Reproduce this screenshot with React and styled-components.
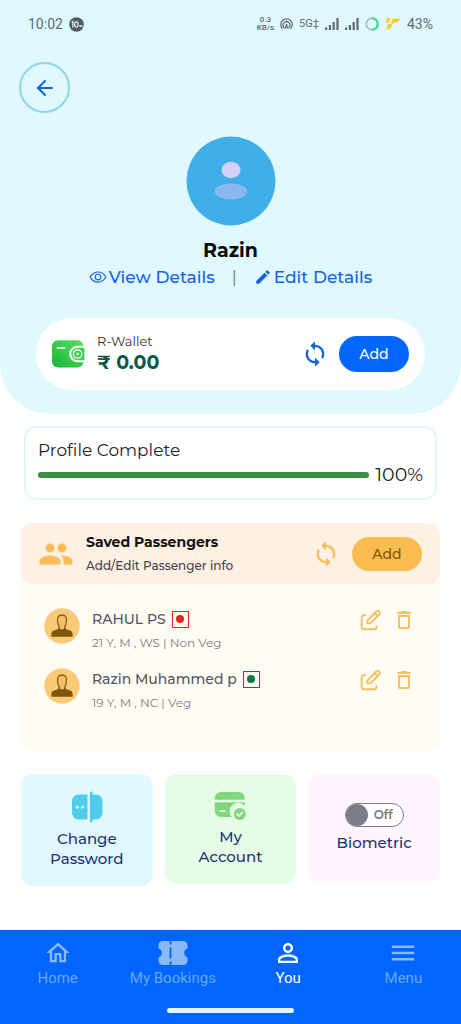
import React from "react";
import styled, { createGlobalStyle } from "styled-components";
import { ArrowLeft } from "lucide-react";
import { IoEyeOutline } from "react-icons/io5";
import {
  MdDeleteOutline,
  MdEdit,
  MdMenu,
  MdOutlineHome,
  MdPeople,
  MdPersonOutline,
  MdSync,
} from "react-icons/md";

const GlobalStyle = createGlobalStyle`
  *, *::before, *::after { box-sizing: border-box; }
  body {
    margin: 0;
    background: #fff;
    font-family: "Montserrat", Inter, "Noto Sans", sans-serif;
    color: #222;
  }
  h1, h2, p, ul { margin: 0; padding: 0; }
  ul { list-style: none; }
  svg { display: block; flex: none; }
  button { font: inherit; border: 0; padding: 0; cursor: pointer; background: none; }
  a { text-decoration: none; }
`;

const Page = styled.div`
  min-height: 100vh;
  display: flex;
  flex-direction: column;
`;

const Header = styled.header`
  background: #e0f8ff;
  border-radius: 0 0 50px 50px;
  padding-bottom: 24px;
`;

const StatusBar = styled.div`
  height: 48px;
  padding: 0 28px;
  display: flex;
  align-items: center;
  justify-content: space-between;
  font: 14px/16px Roboto, sans-serif;
  color: #5c6b70;
`;

const StatusGroup = styled.div`
  display: flex;
  align-items: center;
  gap: 6px;
`;

const NetSpeed = styled.span`
  font-size: 8px;
  line-height: 8px;
  font-weight: 500;
  text-align: center;
`;

const NetType = styled.span`
  font-size: 11px;
`;

const BackButton = styled.button`
  width: 51px;
  height: 51px;
  margin: 14px 0 0 19px;
  border: 2px solid #90d3f0;
  border-radius: 50%;
  display: flex;
  align-items: center;
  justify-content: center;
  color: #1565d8;
`;

const Profile = styled.section`
  margin-top: 23px;
  display: flex;
  flex-direction: column;
  align-items: center;
`;

const UserName = styled.h1`
  margin-top: 12px;
  font-size: 19px;
  line-height: 26px;
  font-weight: 700;
  color: #0b0b0b;
`;

const ProfileLinks = styled.div`
  display: flex;
  align-items: center;
  height: 26px;
  gap: 17px;
  font-size: 17px;
  color: #777;
`;

const ProfileLink = styled.a`
  display: flex;
  align-items: center;
  gap: 2px;
  font-weight: 500;
  color: #1464de;
`;

const Wallet = styled.section`
  margin: 28px 36px 0;
  height: 72px;
  padding: 0 16px;
  border-radius: 36px;
  background: #fff;
  display: flex;
  align-items: center;
`;

const WalletText = styled.div`
  flex: 1;
  margin-left: 12px;
`;

const WalletLabel = styled.p`
  font-size: 13px;
  line-height: 18px;
  color: #333;
`;

const WalletAmount = styled.p`
  font-size: 19px;
  line-height: 26px;
  font-weight: 700;
  color: #07594a;
`;

const IconButton = styled.button`
  color: ${(p) => p.$color};
`;

const AddButton = styled.button`
  width: 70px;
  height: ${(p) => p.$height}px;
  margin-left: ${(p) => p.$gap}px;
  border-radius: 18px;
  font-size: 14px;
  font-weight: 500;
  background: ${(p) => p.$bg};
  color: ${(p) => p.$color};
`;

const Main = styled.main`
  padding: 12px 21px 24px;
`;

const Completion = styled.section`
  margin: 0 3px;
  height: 74px;
  padding: 10px 12px 0;
  border: 2px solid #e0f7fc;
  border-radius: 12px;
`;

const CompletionLabel = styled.p`
  font-size: 17px;
  line-height: 24px;
`;

const CompletionRow = styled.div`
  display: flex;
  align-items: center;
  gap: 6px;
  font-size: 19px;
  line-height: 26px;
`;

const Track = styled.div`
  flex: 1;
  height: 6px;
  border-radius: 3px;
  background: #dcebdd;
`;

const Fill = styled.div`
  height: 100%;
  border-radius: 3px;
  background: #3c8f41;
`;

const Passengers = styled.section`
  margin-top: 23px;
  min-height: 228px;
  border-radius: 12px;
  background: #fffcf4;
`;

const PassengersHead = styled.div`
  height: 61px;
  padding: 0 18px 0 17px;
  border-radius: 12px;
  background: #fff0e4;
  display: flex;
  align-items: center;
`;

const PassengersTitle = styled.div`
  flex: 1;
  margin-left: 12px;
`;

const Title = styled.h2`
  font-size: 14px;
  line-height: 24px;
  font-weight: 700;
  color: #111;
`;

const Subtitle = styled.p`
  font-size: 12px;
  line-height: 24px;
  font-weight: 500;
  color: #444;
`;

const PassengerList = styled.ul`
  padding: 21px 24px 0 23px;
  display: flex;
  flex-direction: column;
  gap: 12px;
`;

const PassengerRow = styled.li`
  display: flex;
  align-items: flex-start;
  height: 48px;
`;

const AvatarSlot = styled.div`
  padding-top: 3px;
`;

const PassengerText = styled.div`
  flex: 1;
  margin-left: 12px;
`;

const PassengerName = styled.p`
  display: flex;
  align-items: center;
  gap: 6px;
  font-size: 14px;
  line-height: 28px;
  font-weight: 500;
  color: #55555f;
`;

const PassengerInfo = styled.p`
  font-size: 12px;
  line-height: 20px;
  color: #808080;
`;

const FoodMark = styled.span`
  width: 17px;
  height: 17px;
  border: 1px solid ${(p) => p.$color};
  display: flex;
  align-items: center;
  justify-content: center;

  &::after {
    content: "";
    width: 8px;
    height: 8px;
    border-radius: 50%;
    background: ${(p) => p.$color};
  }
`;

const RowActions = styled.div`
  display: flex;
  align-items: center;
  gap: 10px;
  padding-top: 3px;
`;

const Tiles = styled.div`
  margin-top: 23px;
  display: grid;
  grid-template-columns: repeat(3, 1fr);
  gap: 12px;
  align-items: start;
`;

const tileStyle = (p) => `
  height: ${p.$height}px;
  padding-top: ${p.$top}px;
  border-radius: 12px;
  background: ${p.$bg};
  display: flex;
  flex-direction: column;
  align-items: center;
  text-align: center;
  font-size: 15px;
  line-height: 20px;
  font-weight: 500;
  color: #1f3270;
`;

const Tile = styled.a`
  ${tileStyle}
`;

const SwitchTile = styled.label`
  ${tileStyle}
`;

const TileText = styled.span`
  width: 90px;
  margin-top: 6px;
`;

const Switch = styled.span`
  width: 59px;
  height: 24px;
  border: 1px solid #7c7c88;
  border-radius: 12px;
  background: #fff;
  display: flex;
  align-items: center;
  justify-content: space-between;
  padding-right: 10px;
  font-size: 12px;
  font-weight: 600;
  color: #77777f;
`;

const SwitchInput = styled.input`
  appearance: none;
  width: 22px;
  height: 22px;
  margin: 0;
  border-radius: 50%;
  background: #7c7c88;
`;

const BottomBar = styled.footer`
  margin-top: auto;
  height: 94px;
  padding-bottom: 11px;
  background: #0066ff;
  display: flex;
  flex-direction: column;
  align-items: center;
  justify-content: space-between;
`;

const Nav = styled.nav`
  width: 100%;
  display: grid;
  grid-template-columns: repeat(4, 1fr);
  padding-top: 8px;
`;

const NavItem = styled.a`
  display: flex;
  flex-direction: column;
  align-items: center;
  font: 15px/20px Roboto, sans-serif;
  color: ${(p) => (p.$active ? "#fff" : "#69a6f8")};
`;

const NavIcon = styled.span`
  height: 30px;
  display: flex;
  align-items: center;
  color: ${(p) => (p.$active ? "#fff" : "#8bb9f7")};
`;

const HomeIndicator = styled.div`
  width: 127px;
  height: 5px;
  border-radius: 3px;
  background: #e4f4ff;
`;

const BatterySaverBadge = () => (
  <svg width="15" height="15" viewBox="0 0 15 15">
    <circle cx="7.5" cy="7.5" r="7.3" fill="#505c61" />
    <path d="M2.6 5.3l1.3-.8v6" fill="none" stroke="#e0f8ff" strokeWidth="1.2" />
    <rect x="5.8" y="4.8" width="3.2" height="5.2" rx="1.6" fill="none" stroke="#e0f8ff" strokeWidth="1.2" />
    <path d="M10.4 8.2h3v1.6h-3z" fill="#e0f8ff" />
  </svg>
);

const Hotspot = () => (
  <svg width="13" height="12" viewBox="0 0 13 12" fill="none" stroke="#5c6b70" strokeWidth="1.2" strokeLinecap="round">
    <path d="M2.2 10.4a5.7 5.7 0 1 1 8.6 0M4 9.4a3.4 3.4 0 1 1 5 0" />
    <path d="M5 10.400l1.500-2.800 1.500 2.800" />
    <circle cx="6.5" cy="6.8" r="1" fill="#5c6b70" stroke="none" />
  </svg>
);

const Signal = () => (
  <svg width="14" height="12" viewBox="0 0 14 12" fill="#5c6b70">
    <rect x="0" y="9.5" width="2.2" height="2.5" />
    <rect x="3.8" y="7" width="2.2" height="5" />
    <rect x="7.6" y="4" width="2.2" height="8" />
    <rect x="11.4" y="0" width="2.2" height="12" />
  </svg>
);

const BatteryRing = () => (
  <svg width="14" height="14" viewBox="0 0 14 14" fill="none" strokeWidth="2">
    <circle cx="7" cy="7" r="5.8" stroke="#a9c3c6" />
    <path d="M7 1.2a5.8 5.8 0 0 1 0 11.6" stroke="#35dc8a" />
  </svg>
);

const Bolt = () => (
  <svg width="16" height="13" viewBox="0 0 16 13" fill="#f6cc22">
    <path d="M2.200 0h3.400L3.400 5H.8zM7.800.4H16L11.600 4.600H9.200L5.400 8.400h2.200L1 12.800l2.400-4.400H1.200l2.600-2.600h2.200z" />
  </svg>
);

const ProfileAvatar = () => (
  <svg width="90" height="90" viewBox="0 0 90 90">
    <circle cx="45" cy="45" r="44.5" fill="#40aee7" />
    <ellipse cx="45" cy="34" rx="9.5" ry="8.3" fill="#d3d1fa" />
    <ellipse cx="45" cy="55.5" rx="16.2" ry="8" fill="#88b8ef" />
  </svg>
);

const WalletIcon = () => (
  <svg width="33" height="28" viewBox="0 0 33 28">
    <defs>
      <linearGradient id="walletGreen" x1="1" y1="0" x2="0" y2="1">
        <stop offset="0" stopColor="#55e366" />
        <stop offset="1" stopColor="#1bb334" />
      </linearGradient>
    </defs>
    <path d="M6 .3h19c3.600 0 6 2 6.600 5.500V22c-.6 3.500-3 5.500-6.600 5.500H6a6 6 0 0 1-6-6V6.300a6 6 0 0 1 6-6z" fill="url(#walletGreen)" />
    <path d="M33 5.800h-7.600a8.200 8.200 0 0 0 0 16.400H33z" fill="#fff" />
    <path d="M32.400 7.800H25.600a6.200 6.200 0 0 0 0 12.400h6.800z" fill="#40d052" />
    <circle cx="25.600" cy="14" r="4.200" fill="none" stroke="#fff" strokeWidth="1.200" />
    <circle cx="25.600" cy="14" r="1.300" fill="#fff" />
    <path d="M5.500 7.800h7" stroke="#fff" strokeWidth="1.800" strokeLinecap="round" />
  </svg>
);

const PersonAvatar = () => (
  <svg width="36" height="36" viewBox="0 0 36 36">
    <circle cx="18" cy="18" r="17.700" fill="#fbca76" />
    <path
      d="M13.600 14.500c-.7-4.600.6-7.500 4.400-7.500s5.100 2.900 4.400 7.500c-.3 1.600-.9 2.900-1.600 3.700v3.600h-5.600v-3.600c-.7-.8-1.300-2.100-1.600-3.700z"
      fill="#f3bf69"
      stroke="#8a601a"
      strokeWidth="1.300"
    />
    <path
      d="M14.800 19.500c.6 1.400 1.700 2.300 3.200 2.300s2.600-.9 3.200-2.300l1 1.700 3.900 1.400c1.700.7 2.500 1.900 2.500 3.500v2.600H7.400v-2.600c0-1.600.8-2.800 2.500-3.500l3.900-1.400z"
      fill="#80560c"
    />
  </svg>
);

const EditBox = () => (
  <svg width="22" height="22" viewBox="0 0 22 22" fill="none" stroke="currentColor" strokeWidth="1.900" strokeLinecap="round" strokeLinejoin="round">
    <path d="M5.500 6.200H3.600a1.900 1.900 0 0 0-1.900 1.900v10.200a1.900 1.900 0 0 0 1.900 1.900h10.900a1.900 1.900 0 0 0 1.900-1.900V17" />
    <path d="M7.400 14.400v-3L16.300 2.500a1.900 1.900 0 0 1 2.700 0l.3.300a1.900 1.900 0 0 1 0 2.700L10.400 14.400zM15.600 5l1.500 1.500" />
  </svg>
);

const DoorIcon = () => (
  <svg width="32" height="32" viewBox="0 0 32 32" fill="#50cdea">
    <path d="M16.500 3.500v25H7.500A6.500 6.500 0 0 1 1 22V10a6.500 6.500 0 0 1 6.500-6.500z" />
    <path d="M21.500 3.500H25A6.500 6.500 0 0 1 31.500 10v12a6.500 6.500 0 0 1-6.500 6.500h-3.500v1.800a1.300 1.300 0 0 1-2.600 0V1.700a1.300 1.300 0 0 1 2.600 0z" />
    <circle cx="6.300" cy="16" r="1.600" fill="#e0f8ff" />
    <circle cx="11.600" cy="16" r="1.600" fill="#e0f8ff" />
  </svg>
);

const CardIcon = () => (
  <svg width="32" height="30" viewBox="0 0 32 30" fill="#82d77c">
    <path d="M7 1h17.500A6.200 6.200 0 0 1 30.700 7.200V8.800H.8V7.200A6.200 6.200 0 0 1 7 1z" />
    <path d="M.8 11.200h29.900v3.600a8 8 0 0 0-13 11.200H7A6.200 6.200 0 0 1 .8 19.800z" />
    <path d="M6.500 20h4" stroke="#e6fee6" strokeWidth="2" strokeLinecap="round" />
    <circle cx="25.800" cy="23" r="6" />
    <path d="M23 23l2 2 3.600-3.600" fill="none" stroke="#e6fee6" strokeWidth="1.800" strokeLinecap="round" strokeLinejoin="round" />
  </svg>
);

const TicketIcon = () => (
  <svg width="30" height="26" viewBox="0 0 30 26" fill="currentColor">
    <path
      fillRule="evenodd"
      d="M5 1h6.600v3.600h1.800V1H25a4.600 4.600 0 0 1 4.500 4.500V8.600a4.600 4.600 0 0 0 0 8.800v3.100A4.600 4.600 0 0 1 25 25H13.400v-3.600h-1.800V25H5A4.600 4.600 0 0 1 .5 20.500V17.400a4.600 4.600 0 0 0 0-8.800V5.500A4.600 4.600 0 0 1 5 1zM11.600 7.500v11h1.800v-11z"
    />
  </svg>
);

const passengers = [
  { name: "RAHUL PS", info: "21 Y, M , WS | Non Veg", mark: "#e8231f", food: "Non Veg" },
  { name: "Razin Muhammed p", info: "19 Y, M , NC | Veg", mark: "#117547", food: "Veg" },
];

const navItems = [
  { label: "Home", icon: <MdOutlineHome size={28} /> },
  { label: "My Bookings", icon: <TicketIcon /> },
  { label: "You", icon: <MdPersonOutline size={30} />, active: true },
  { label: "Menu", icon: <MdMenu size={30} /> },
];

const completion = 100;

export default function App() {
  return (
    <Page>
      <GlobalStyle />
      <Header>
        <StatusBar>
          <StatusGroup>
            <span>10:02</span>
            <BatterySaverBadge />
          </StatusGroup>
          <StatusGroup>
            <NetSpeed>
              0.3
              <br />
              KB/s
            </NetSpeed>
            <Hotspot />
            <NetType>5G‡</NetType>
            <Signal />
            <Signal />
            <BatteryRing />
            <Bolt />
            <span>43%</span>
          </StatusGroup>
        </StatusBar>
        <BackButton aria-label="Back">
          <ArrowLeft size={24} />
        </BackButton>
        <Profile>
          <ProfileAvatar />
          <UserName>Razin</UserName>
          <ProfileLinks>
            <ProfileLink href="#view">
              <IoEyeOutline size={18} />
              View Details
            </ProfileLink>
            <span>|</span>
            <ProfileLink href="#edit">
              <MdEdit size={18} />
              Edit Details
            </ProfileLink>
          </ProfileLinks>
        </Profile>
        <Wallet>
          <WalletIcon />
          <WalletText>
            <WalletLabel>R-Wallet</WalletLabel>
            <WalletAmount>₹ 0.00</WalletAmount>
          </WalletText>
          <IconButton $color="#1464de" aria-label="Refresh wallet">
            <MdSync size={28} />
          </IconButton>
          <AddButton $bg="#0066ff" $color="#fff" $height={36} $gap={10}>
            Add
          </AddButton>
        </Wallet>
      </Header>

      <Main>
        <Completion>
          <CompletionLabel>Profile Complete</CompletionLabel>
          <CompletionRow>
            <Track>
              <Fill style={{ width: `${completion}%` }} />
            </Track>
            <span>{completion}%</span>
          </CompletionRow>
        </Completion>

        <Passengers>
          <PassengersHead>
            <MdPeople size={36} color="#fabe58" />
            <PassengersTitle>
              <Title>Saved Passengers</Title>
              <Subtitle>Add/Edit Passenger info</Subtitle>
            </PassengersTitle>
            <IconButton $color="#fabe58" aria-label="Refresh passengers">
              <MdSync size={28} />
            </IconButton>
            <AddButton $bg="#fabc4e" $color="#80560c" $height={34} $gap={12}>
              Add
            </AddButton>
          </PassengersHead>
          <PassengerList>
            {passengers.map((p) => (
              <PassengerRow key={p.name}>
                <AvatarSlot>
                  <PersonAvatar />
                </AvatarSlot>
                <PassengerText>
                  <PassengerName>
                    {p.name}
                    <FoodMark $color={p.mark} role="img" aria-label={p.food} />
                  </PassengerName>
                  <PassengerInfo>{p.info}</PassengerInfo>
                </PassengerText>
                <RowActions>
                  <IconButton $color="#f6bf62" aria-label={`Edit ${p.name}`}>
                    <EditBox />
                  </IconButton>
                  <IconButton $color="#f6bf62" aria-label={`Delete ${p.name}`}>
                    <MdDeleteOutline size={24} />
                  </IconButton>
                </RowActions>
              </PassengerRow>
            ))}
          </PassengerList>
        </Passengers>

        <Tiles>
          <Tile href="#password" $bg="#e0f8ff" $height={112} $top={17}>
            <DoorIcon />
            <TileText>Change Password</TileText>
          </Tile>
          <Tile href="#account" $bg="#e6fee6" $height={110} $top={17}>
            <CardIcon />
            <TileText>My Account</TileText>
          </Tile>
          <SwitchTile $bg="#fff5fc" $height={109} $top={29}>
            <Switch>
              <SwitchInput type="checkbox" role="switch" />
              Off
            </Switch>
            <TileText>Biometric</TileText>
          </SwitchTile>
        </Tiles>
      </Main>

      <BottomBar>
        <Nav>
          {navItems.map((item) => (
            <NavItem key={item.label} href="#" $active={item.active}>
              <NavIcon $active={item.active}>{item.icon}</NavIcon>
              {item.label}
            </NavItem>
          ))}
        </Nav>
        <HomeIndicator />
      </BottomBar>
    </Page>
  );
}
